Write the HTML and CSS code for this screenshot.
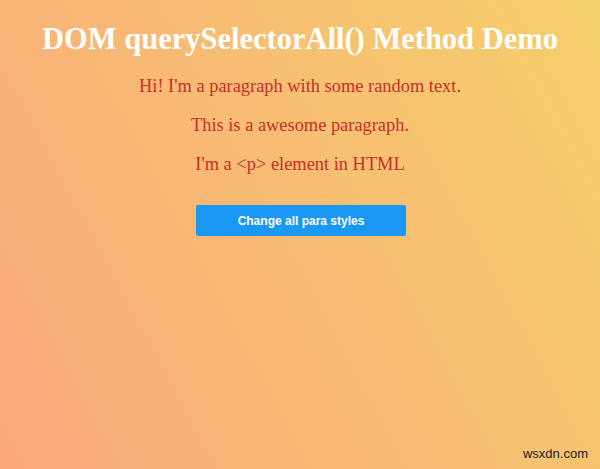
FILE: index.html
```html
<!DOCTYPE html>
<html>
<head>
<meta charset="utf-8">
<link rel="stylesheet" href="styles.css">
</head>
<body>
<main class="page">
  <h1 class="title">DOM querySelectorAll() Method Demo</h1>
  <p class="para">Hi! I'm a paragraph with some random text.</p>
  <p class="para">This is a awesome paragraph.</p>
  <p class="para">I'm a &lt;p&gt; element in HTML</p>
  <button class="btn">Change all para styles</button>
</main>
<span class="mark">wsxdn.com</span>
</body>
</html>
```
FILE: styles.css
```css
html, body {
  margin: 0;
  height: 100%;
}
body {
  background: linear-gradient(62deg, #f9a97c, #f6cf6b);
  font-family: "Liberation Serif", "Times New Roman", serif;
  position: relative;
  overflow: hidden;
}
.page {
  display: flex;
  flex-direction: column;
  align-items: center;
  padding-top: 22px;
}
.title {
  color: #fff;
  font-size: 30.5px;
  font-weight: bold;
  margin: 0 0 19px;
}
.para {
  color: #c8302b;
  font-size: 18.4px;
  margin: 0 0 18px;
}
.btn {
  margin-top: 12px;
  margin-left: 2px;
  width: 210px;
  height: 31px;
  background: #1a98f4;
  color: #fff;
  border: none;
  border-radius: 2px;
  font-family: "Liberation Sans", Arial, sans-serif;
  font-weight: bold;
  font-size: 12px;
}
.mark {
  position: absolute;
  right: 12px;
  bottom: 8px;
  font-family: "Liberation Sans", Arial, sans-serif;
  font-size: 13px;
  color: #222;
}
```
